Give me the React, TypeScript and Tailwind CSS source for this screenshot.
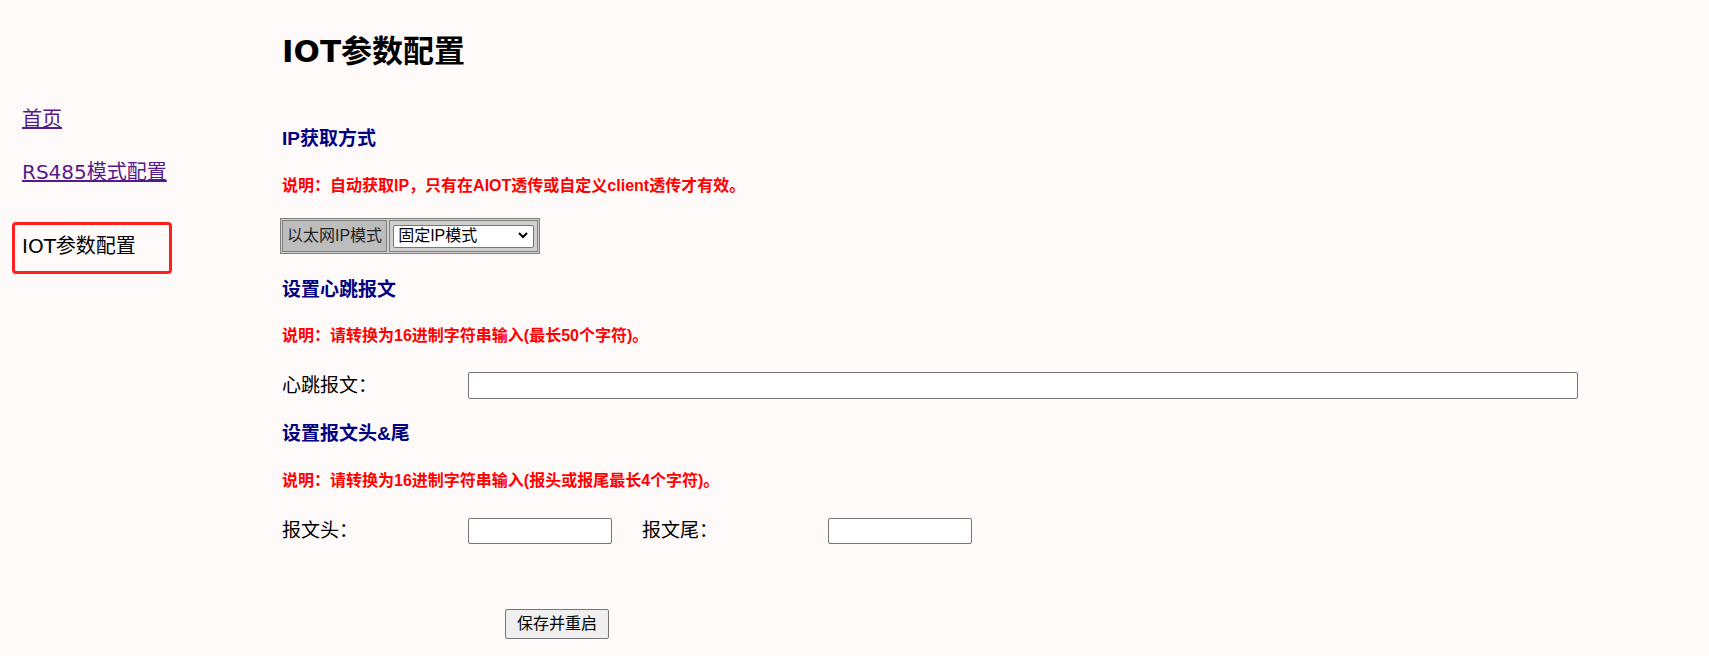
import React from "react";

const navFont = { fontFamily: '"DejaVu Sans", "Noto Sans CJK SC", sans-serif' };

const App = () => {
  return (
    <div
      className="min-h-screen w-full bg-[#fffafa] text-black flex font-['Liberation_Sans','Noto_Sans_CJK_SC',sans-serif]"
    >
      {/* left nav */}
      <div className="w-[282px] shrink-0 pl-[12px] pt-[106px] font-['DejaVu_Sans','Noto_Sans_CJK_SC',sans-serif]">
        <a href="#" className="block pl-[10px] text-[20px] leading-[26px] text-[#551a8b] underline">
          首页
        </a>
        <a href="#" className="block pl-[10px] mt-[27px] text-[20px] leading-[26px] text-[#551a8b] underline">
          RS485模式配置
        </a>
        <div className="mt-[37px] w-[160px] h-[52px] border-[3px] border-[#ff1f1f] rounded-[4px] pl-[7px] flex items-center">
          <span className="text-[20px] leading-[26px] -mt-[4px]">IOT参数配置</span>
        </div>
      </div>

      {/* main */}
      <div className="flex-1 flex flex-col items-start pr-[131px]">
        <h1 className="mt-[31px] text-[31px] leading-[40px] font-bold" style={navFont}>
          IOT参数配置
        </h1>

        <h3 className="mt-[56px] text-[19px] leading-[24px] font-bold text-[#000080]">IP获取方式</h3>
        <p className="mt-[24px] text-[16px] leading-[22px] font-bold text-[#ff0000]">
          说明：自动获取IP，只有在AIOT透传或自定义client透传才有效。
        </p>

        <div className="mt-[21px] -ml-[2px] flex border border-[#808080] bg-[#cfcfcf] p-[1px] gap-[2px]">
          <div className="h-[32px] border border-[#808080] bg-[#bdbdbd] px-[4px] flex items-center text-[16px] text-[#222]">
            以太网IP模式
          </div>
          <div className="h-[32px] border border-[#808080] bg-[#cfcfcf] px-[3px] flex items-center">
            <div className="relative">
              <select className="appearance-none w-[141px] h-[23px] bg-white border border-[#767676] rounded-[2px] pl-[4px] text-[16px] leading-[20px] text-black">
                <option>固定IP模式</option>
                <option>自动获取IP</option>
              </select>
              <svg
                className="absolute right-[6px] top-[8px] pointer-events-none"
                width="10"
                height="7"
                viewBox="0 0 10 7"
              >
                <path d="M1 1 L5 5 L9 1" fill="none" stroke="#000" strokeWidth="2" />
              </svg>
            </div>
          </div>
        </div>

        <h3 className="mt-[24px] text-[19px] leading-[24px] font-bold text-[#000080]">设置心跳报文</h3>
        <p className="mt-[23px] text-[16px] leading-[22px] font-bold text-[#ff0000]">
          说明：请转换为16进制字符串输入(最长50个字符)。
        </p>

        <div className="mt-[25px] w-full flex items-center">
          <span className="w-[186px] shrink-0 text-[19px] leading-[24px]">心跳报文：</span>
          <input
            type="text"
            className="flex-1 h-[27px] bg-white border border-[#767676] rounded-[2px]"
          />
        </div>

        <h3 className="mt-[23px] text-[19px] leading-[24px] font-bold text-[#000080]">设置报文头&amp;尾</h3>
        <p className="mt-[24px] text-[16px] leading-[22px] font-bold text-[#ff0000]">
          说明：请转换为16进制字符串输入(报头或报尾最长4个字符)。
        </p>

        <div className="mt-[26px] flex items-center">
          <span className="w-[186px] shrink-0 text-[19px] leading-[24px]">报文头：</span>
          <input
            type="text"
            className="w-[144px] h-[26px] bg-white border border-[#767676] rounded-[2px]"
          />
          <span className="ml-[30px] w-[186px] shrink-0 text-[19px] leading-[24px]">报文尾：</span>
          <input
            type="text"
            className="w-[144px] h-[26px] bg-white border border-[#767676] rounded-[2px]"
          />
        </div>

        <button className="mt-[65px] ml-[223px] h-[30px] px-[11px] bg-[#efefef] border border-[#767676] rounded-[2px] text-[16px] leading-[20px] text-black">
          保存并重启
        </button>
      </div>
    </div>
  );
};

export default App;
